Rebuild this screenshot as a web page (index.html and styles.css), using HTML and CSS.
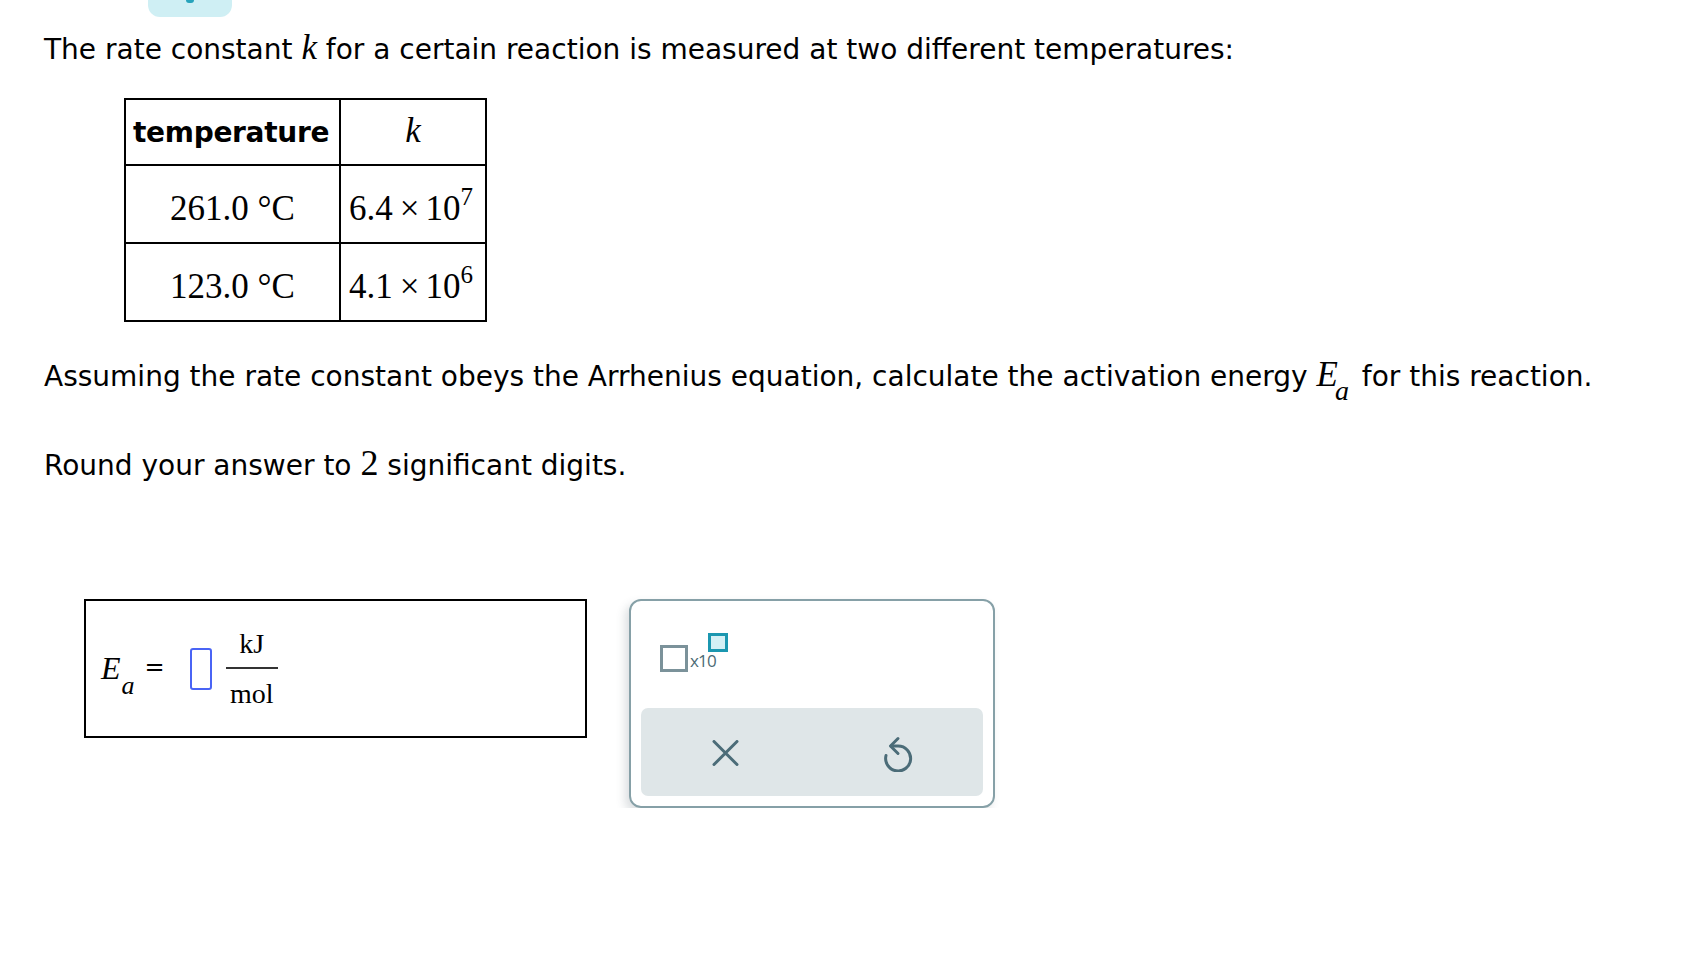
FILE: index.html
```html
<!DOCTYPE html>
<html>
<head>
<meta charset="utf-8">
<link rel="stylesheet" href="styles.css">
</head>
<body>
<div class="badge"><span class="badge-dot"></span></div>
<p class="line l1">The rate constant <span class="mi">k</span> for a certain reaction is measured at two different temperatures:</p>
<table class="data">
  <colgroup><col class="w1"><col class="w2"></colgroup>
  <tr class="hrow"><th class="c1">temperature</th><th class="c2"><span class="mi">k</span></th></tr>
  <tr class="drow"><td class="c1 num">261.0 °C</td><td class="c2 num">6.4<span class="times">×</span>10<sup>7</sup></td></tr>
  <tr class="drow"><td class="c1 num">123.0 °C</td><td class="c2 num">4.1<span class="times">×</span>10<sup>6</sup></td></tr>
</table>
<p class="line l2">Assuming the rate constant obeys the Arrhenius equation, calculate the activation energy <span class="mi">E</span><sub class="misub">a</sub> for this reaction.</p>
<p class="line l3">Round your answer to <span class="mn">2</span> significant digits.</p>
<div class="answer-row">
  <div class="answer-box">
    <span class="ea-e">E</span><span class="ea-a">a</span>
    <span class="eq">=</span>
    <span class="slot"></span>
    <span class="frac"><span class="num-top">kJ</span><span class="bar"></span><span class="den">mol</span></span>
  </div>
  <div class="panel">
    <div class="sci">
      <span class="sq-big"></span><span class="x10">x10</span><span class="sq-small"></span>
    </div>
    <div class="actions">
      <svg class="ico-x" width="28" height="26" viewBox="0 0 28 26"><path d="M2 1.5 L25 24.5 M25 1.5 L2 24.5" stroke="#4b6c78" stroke-width="3" stroke-linecap="round" fill="none"/></svg>
      <svg class="ico-undo" width="30" height="36" viewBox="0 0 30 36"><path d="M7 10 L14 10 A12.5 12.5 0 1 1 2 19.5" stroke="#4b6c78" stroke-width="3" stroke-linecap="round" fill="none"/><path d="M14 2.5 L6.5 10 L14 17.5" stroke="#4b6c78" stroke-width="3" stroke-linecap="round" stroke-linejoin="round" fill="none"/></svg>
    </div>
  </div>
</div>
</body>
</html>
```
FILE: styles.css
```css
body {
  margin: 0;
  background: #ffffff;
  font-family: "DejaVu Sans", Verdana, sans-serif;
  font-size: 28px;
  color: #000;
}
.badge {
  position: relative;
  margin-left: 148px;
  width: 84px;
  height: 17px;
  background: #cfeff4;
  border-radius: 0 0 12px 12px;
}
.badge-dot {
  position: absolute;
  left: 38px;
  top: 0;
  width: 8px;
  height: 3px;
  background: #27a3bb;
  border-radius: 0 0 4px 4px;
}
.line {
  margin: 0;
  margin-left: 44px;
  height: 40px;
  line-height: 40px;
  white-space: nowrap;
}
.l1 { margin-top: 13px; }
.l2 { margin-top: 35px; }
.l3 { margin-top: 49px; }
.mi {
  font-family: "Liberation Serif", "Times New Roman", serif;
  font-style: italic;
  font-size: 35px;
  line-height: 0;
}
.mn {
  font-family: "Liberation Serif", "Times New Roman", serif;
  font-size: 36px;
  line-height: 0;
}
.misub {
  font-family: "Liberation Serif", "Times New Roman", serif;
  font-style: italic;
  font-size: 28px;
  line-height: 0;
  vertical-align: -14px;
  margin-left: -3px;
  margin-right: 4px;
}
.data {
  margin: 28px 0 0 124px;
  border-collapse: collapse;
  table-layout: fixed;
  width: 361px;
}
.w1 { width: 215px; }
.w2 { width: 146px; }
.data th, .data td {
  border: 2px solid #000;
  padding: 0;
  text-align: center;
}
.data td { padding-top: 9px; }
.hrow { height: 66px; }
.drow { height: 78px; }
.data th.c1 {
  font-family: "DejaVu Sans", Verdana, sans-serif;
  font-weight: bold;
  font-size: 28px;
  text-align: left;
  padding-left: 7px;
  letter-spacing: -0.3px;
}
.data th.c2 { font-weight: normal; }
.num {
  font-family: "Liberation Serif", "Times New Roman", serif;
  font-size: 35px;
}
.data td.c2 {
  text-align: left;
  padding-left: 8px;
  white-space: nowrap;
}
.times { margin: 0 6px 0 7px; }
.data sup {
  font-size: 25px;
  vertical-align: 15px;
  line-height: 0;
}
.answer-row {
  display: flex;
  align-items: flex-start;
  margin: 113px 0 0 84px;
  gap: 42px;
}
.answer-box {
  box-sizing: border-box;
  width: 503px;
  height: 139px;
  border: 2px solid #000;
  display: flex;
  align-items: center;
  padding-left: 15px;
}
.ea-e {
  font-family: "Liberation Serif", "Times New Roman", serif;
  font-style: italic;
  font-size: 32px;
  line-height: 32px;
  position: relative;
  top: -1px;
}
.ea-a {
  font-family: "Liberation Serif", "Times New Roman", serif;
  font-style: italic;
  font-size: 26px;
  line-height: 26px;
  position: relative;
  top: 17px;
  margin-left: 1px;
}
.eq {
  font-family: "DejaVu Sans", sans-serif;
  font-size: 24px;
  line-height: 24px;
  margin-left: 10px;
  position: relative;
  top: -2px;
}
.slot {
  box-sizing: border-box;
  width: 22px;
  height: 42px;
  border: 2px solid #4a64f5;
  border-radius: 3px;
  margin-left: 25px;
}
.frac {
  display: inline-flex;
  flex-direction: column;
  align-items: center;
  margin-left: 14px;
  font-family: "Liberation Serif", "Times New Roman", serif;
  font-size: 28px;
  width: 52px;
}
.num-top { line-height: 28px; margin-bottom: 9px; }
.bar { width: 52px; height: 2px; background: #333; }
.den { line-height: 28px; margin-top: 11px; }
.panel {
  box-sizing: border-box;
  width: 366px;
  height: 209px;
  border: 2px solid #86a0a7;
  border-radius: 12px;
  box-shadow: -4px 5px 10px rgba(60, 80, 90, 0.18);
  padding: 31px 10px 10px 10px;
  display: flex;
  flex-direction: column;
}
.sci {
  position: relative;
  height: 44px;
  margin-left: 19px;
}
.sq-big {
  position: absolute;
  left: 0;
  top: 13px;
  box-sizing: border-box;
  width: 28px;
  height: 27px;
  border: 3px solid #7b929a;
}
.x10 {
  position: absolute;
  left: 30px;
  top: 20px;
  font-family: "Open Sans", "DejaVu Sans", sans-serif;
  font-size: 17px;
  line-height: 18px;
  color: #4c6a74;
  letter-spacing: -0.8px;
}
.sq-small {
  position: absolute;
  left: 48px;
  top: 1px;
  box-sizing: border-box;
  width: 20px;
  height: 19px;
  border: 3px solid #1b97b0;
  background: #d4f0f5;
}
.actions {
  margin-top: 32px;
  height: 89px;
  background: #dfe6e8;
  border-radius: 7px;
  display: flex;
  align-items: center;
  justify-content: space-between;
  padding: 0 69px 0 71px;
}
.ico-x { margin-top: 2px; }
.ico-undo { margin-top: 4px; }
```
